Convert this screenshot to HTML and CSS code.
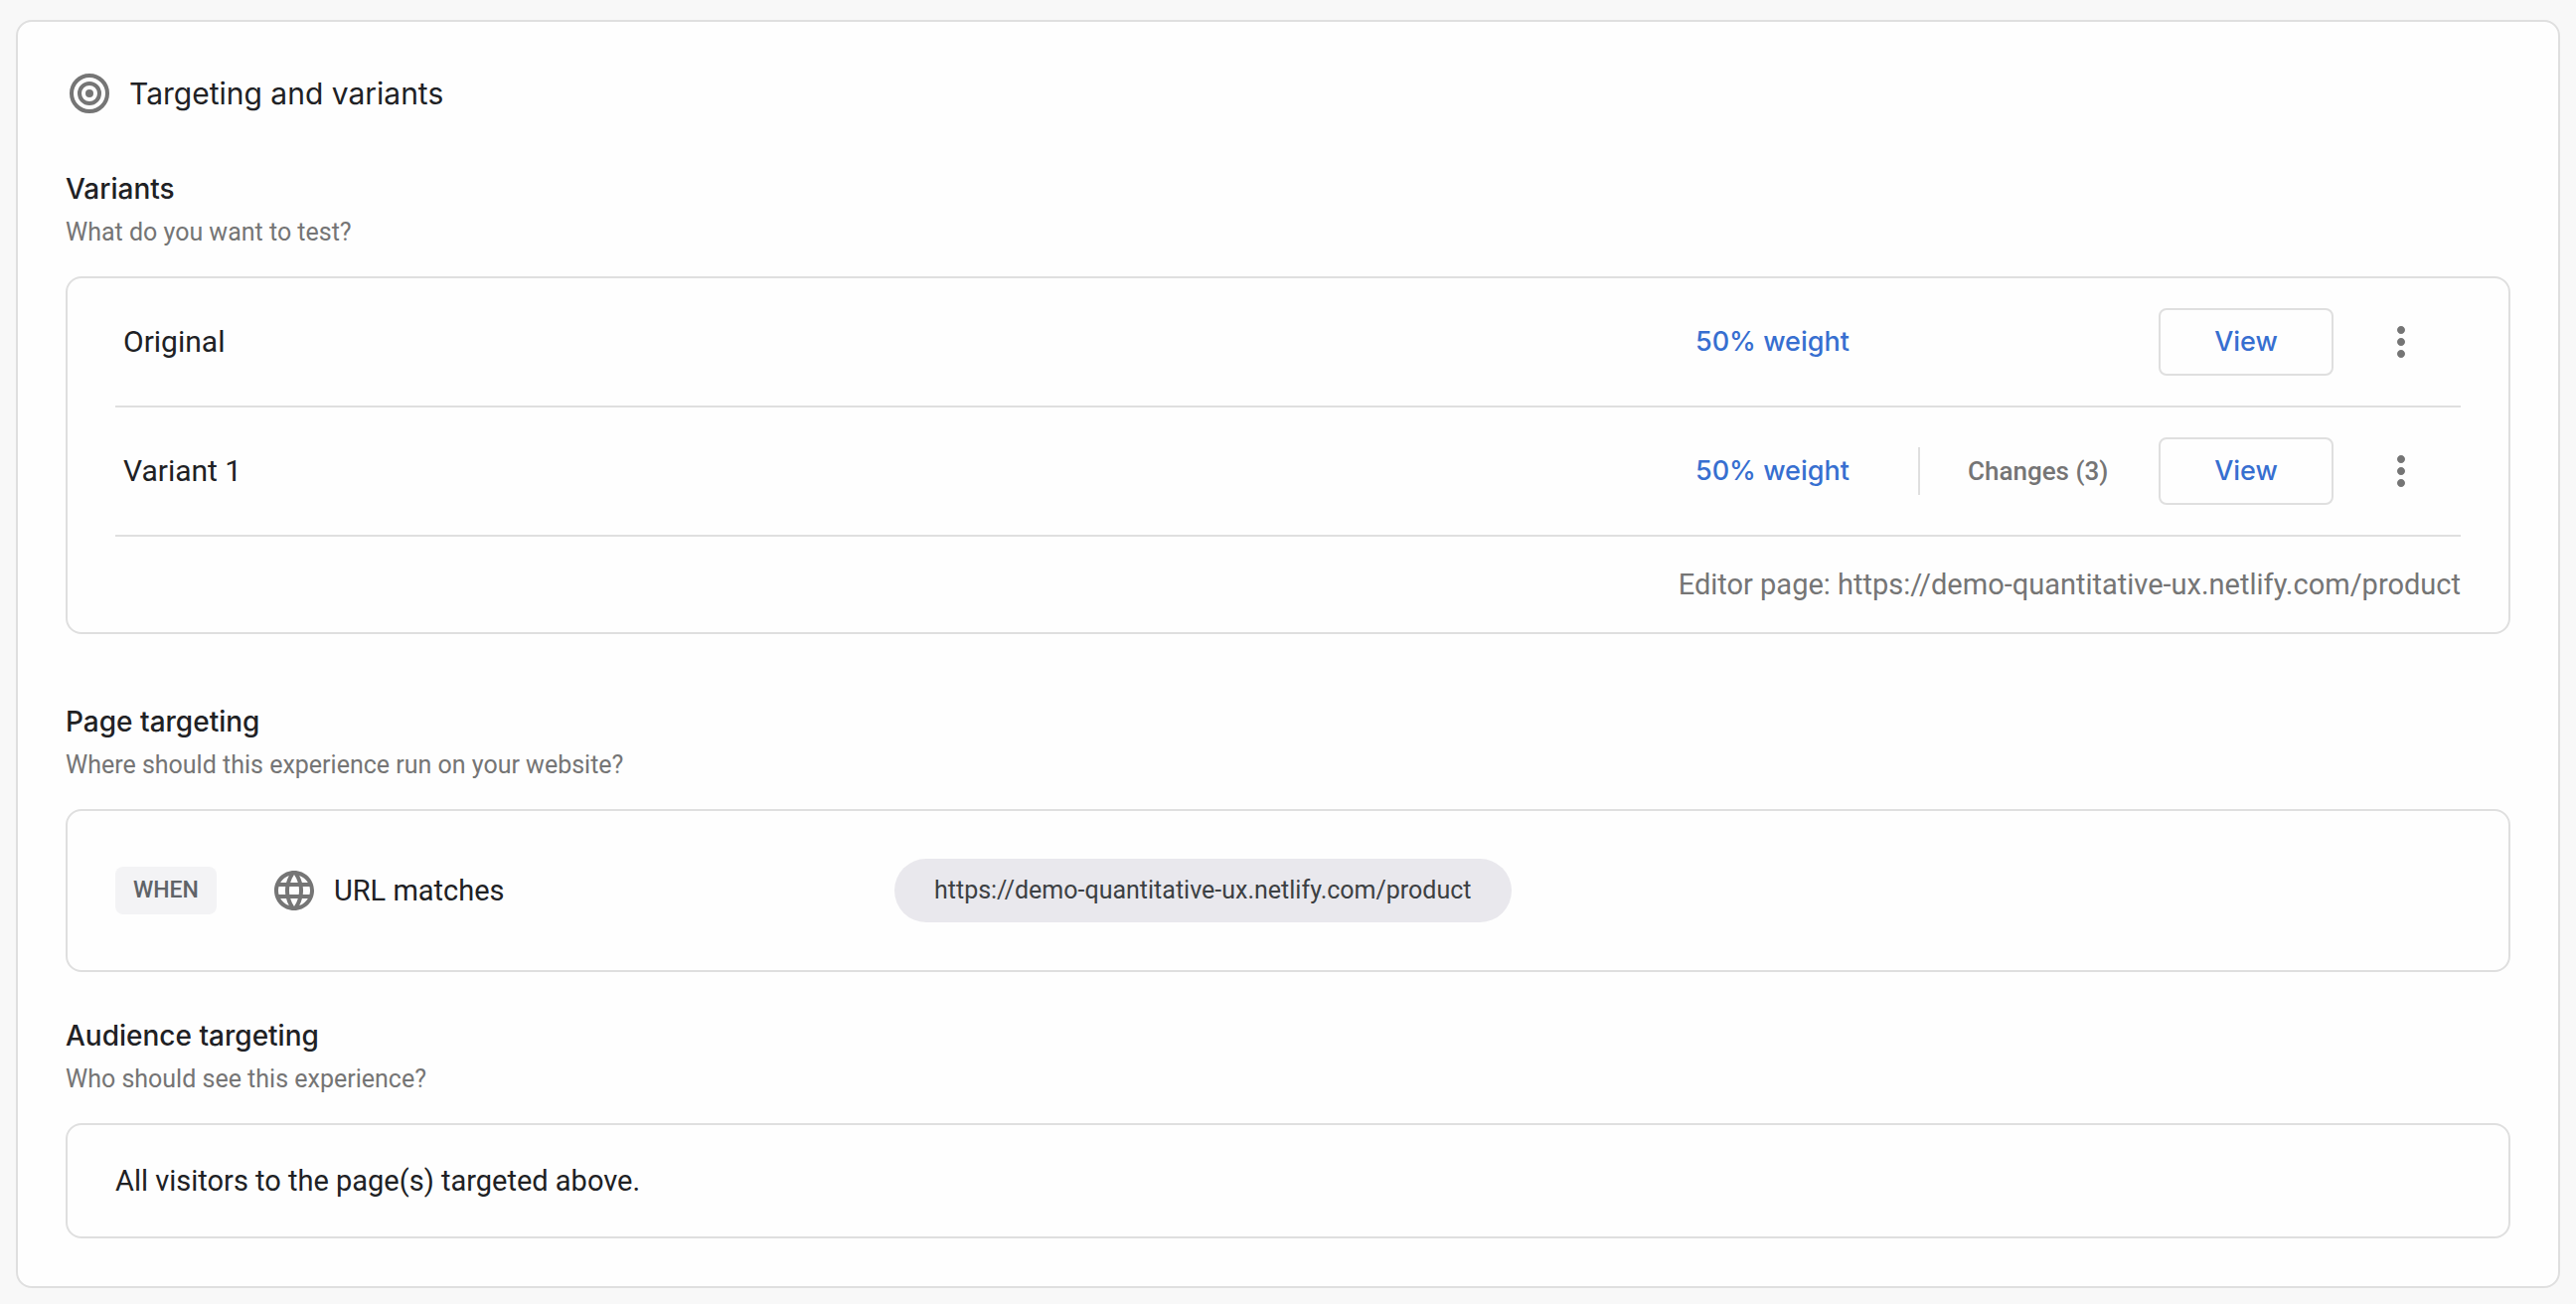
FILE: index.html
```html
<!DOCTYPE html>
<html lang="en">
<head>
<meta charset="utf-8">
<meta name="viewport" content="width=device-width, initial-scale=1">
<title>Targeting and variants</title>
<link rel="stylesheet" href="styles.css">
</head>
<body>
<main class="card">
  <header class="card-header">
    <svg class="icon" viewBox="0 0 48 48" aria-hidden="true">
      <circle cx="24" cy="24" r="18" fill="none" stroke="currentColor" stroke-width="4"/>
      <circle cx="24" cy="24" r="10" fill="none" stroke="currentColor" stroke-width="4"/>
      <circle cx="24" cy="24" r="4" fill="currentColor"/>
    </svg>
    <h1 class="card-title">Targeting and variants</h1>
  </header>

  <section class="section-variants">
    <h2 class="section-title">Variants</h2>
    <p class="section-hint">What do you want to test?</p>
    <div class="panel">
      <ul class="variants">
        <li class="variant">
          <span class="variant-name">Original</span>
          <a class="weight" href="#weight">50% weight</a>
          <span></span>
          <button class="view" type="button">View</button>
          <button class="more" type="button" aria-label="More options for Original">
            <svg class="icon" viewBox="0 0 24 24" aria-hidden="true"><path fill="currentColor" d="M12 8c1.100 0 2-.900 2-2s-.900-2-2-2-2 .900-2 2 .900 2 2 2zm0 2c-1.100 0-2 .900-2 2s.900 2 2 2 2-.900 2-2-.900-2-2-2zm0 6c-1.100 0-2 .900-2 2s.900 2 2 2 2-.900 2-2-.900-2-2-2z"/></svg>
          </button>
        </li>
        <li class="variant">
          <span class="variant-name">Variant 1</span>
          <a class="weight" href="#weight">50% weight</a>
          <span class="changes">Changes (3)</span>
          <button class="view" type="button">View</button>
          <button class="more" type="button" aria-label="More options for Variant 1">
            <svg class="icon" viewBox="0 0 24 24" aria-hidden="true"><path fill="currentColor" d="M12 8c1.100 0 2-.900 2-2s-.900-2-2-2-2 .900-2 2 .900 2 2 2zm0 2c-1.100 0-2 .900-2 2s.900 2 2 2 2-.900 2-2-.900-2-2-2zm0 6c-1.100 0-2 .900-2 2s.900 2 2 2 2-.900 2-2-.900-2-2-2z"/></svg>
          </button>
        </li>
      </ul>
      <p class="editor-page">Editor page: https://demo-quantitative-ux.netlify.com/product</p>
    </div>
  </section>

  <section class="section-page">
    <h2 class="section-title">Page targeting</h2>
    <p class="section-hint">Where should this experience run on your website?</p>
    <div class="panel rule">
      <div class="rule-type">
        <span class="when">WHEN</span>
        <svg class="icon" viewBox="0 0 24 24" aria-hidden="true"><path fill="currentColor" d="M11.990 2C6.470 2 2 6.480 2 12s4.470 10 9.990 10C17.520 22 22 17.520 22 12S17.520 2 11.990 2zm6.930 6h-2.950c-.320-1.250-.780-2.450-1.380-3.560 1.840.630 3.370 1.910 4.330 3.560zM12 4.040c.830 1.200 1.480 2.530 1.910 3.960h-3.820c.430-1.430 1.080-2.760 1.910-3.960zM4.260 14C4.100 13.360 4 12.690 4 12s.100-1.360.260-2h3.380c-.080.660-.140 1.320-.140 2 0 .680.060 1.340.140 2H4.260zm.820 2h2.950c.320 1.250.780 2.450 1.380 3.560-1.840-.630-3.370-1.900-4.330-3.560zm2.950-8H5.080c.960-1.660 2.490-2.930 4.330-3.560C8.810 5.550 8.350 6.750 8.030 8zM12 19.960c-.830-1.200-1.480-2.530-1.910-3.960h3.820c-.430 1.430-1.080 2.760-1.910 3.960zM14.340 14H9.660c-.090-.660-.160-1.320-.160-2 0-.680.070-1.350.160-2h4.680c.090.650.160 1.320.160 2 0 .680-.070 1.340-.160 2zm.250 5.560c.600-1.110 1.060-2.310 1.380-3.560h2.950c-.960 1.650-2.490 2.930-4.330 3.560zM16.360 14c.080-.660.140-1.320.140-2 0-.680-.060-1.340-.140-2h3.380c.160.640.260 1.310.260 2s-.100 1.360-.260 2h-3.380z"/></svg>
        <span>URL matches</span>
      </div>
      <span class="chip">https://demo-quantitative-ux.netlify.com/product</span>
    </div>
  </section>

  <section class="section-audience">
    <h2 class="section-title">Audience targeting</h2>
    <p class="section-hint">Who should see this experience?</p>
    <p class="panel audience">All visitors to the page(s) targeted above.</p>
  </section>
</main>
</body>
</html>
```
FILE: styles.css
```css
:root {
  --text: #202124;
  --muted: #757575;
  --line: #dfdfdf;
  --link: #376fd0;
  --heading-font: Inter, "Open Sans", sans-serif;
}

* {
  box-sizing: border-box;
}

body {
  margin: 0;
  padding: 20px 16px 16px;
  background: #f8f8f8;
  color: var(--text);
  font: 400 29px/40px Roboto, sans-serif;
}

h1, h2, p, ul {
  margin: 0;
  padding: 0;
}

.card {
  padding: 48px;
  background: #fefefe;
  border: 2px solid var(--line);
  border-radius: 16px;
}

.card-header {
  display: flex;
  align-items: center;
  gap: 16px;
}

.icon {
  display: block;
  flex: none;
  width: 48px;
  height: 48px;
  color: var(--muted);
}

.card-title {
  font: 400 30px/48px var(--heading-font);
}

.section-variants {
  margin-top: 52px;
}

.section-page {
  margin-top: 68px;
}

.section-audience {
  margin-top: 44px;
}

.section-title {
  font: 500 28px/40px var(--heading-font);
}

.section-hint {
  margin: 4px 0 24px;
  color: var(--muted);
  font-size: 25px;
}

.panel {
  padding: 0 48px;
  border: 2px solid var(--line);
  border-radius: 16px;
}

.variants {
  list-style: none;
}

.variant {
  display: grid;
  grid-template-columns: 1fr 224px 242px 176px 128px;
  align-items: center;
  min-height: 130px;
  border-bottom: 2px solid var(--line);
}

.variant-name {
  padding-left: 8px;
  font-size: 30px;
}

.weight,
.view {
  color: var(--link);
  font: 500 27px/40px var(--heading-font);
  text-decoration: none;
}

.changes {
  padding: 4px 0 4px 48px;
  border-left: 2px solid var(--line);
  color: var(--muted);
  font-size: 26px;
  font-weight: 500;
}

.view {
  height: 68px;
  padding: 0;
  background: none;
  border: 2px solid var(--line);
  border-radius: 8px;
}

.more {
  justify-self: end;
  margin-right: 36px;
  padding: 0;
  background: none;
  border: 0;
}

.editor-page {
  padding: 28px 0;
  color: var(--muted);
  text-align: right;
}

.rule {
  display: flex;
  align-items: center;
  min-height: 164px;
}

.rule-type {
  display: flex;
  align-items: center;
  gap: 16px;
  width: 784px;
}

.when {
  margin-right: 38px;
  padding: 4px 18px;
  background: #f3f3f5;
  border-radius: 8px;
  color: #5f6368;
  font-size: 23px;
  font-weight: 500;
}

.chip {
  padding: 12px 40px;
  background: #e9e8ed;
  border-radius: 32px;
  color: #3c4043;
  font-size: 25px;
}

.audience {
  padding: 36px 48px;
}
```
